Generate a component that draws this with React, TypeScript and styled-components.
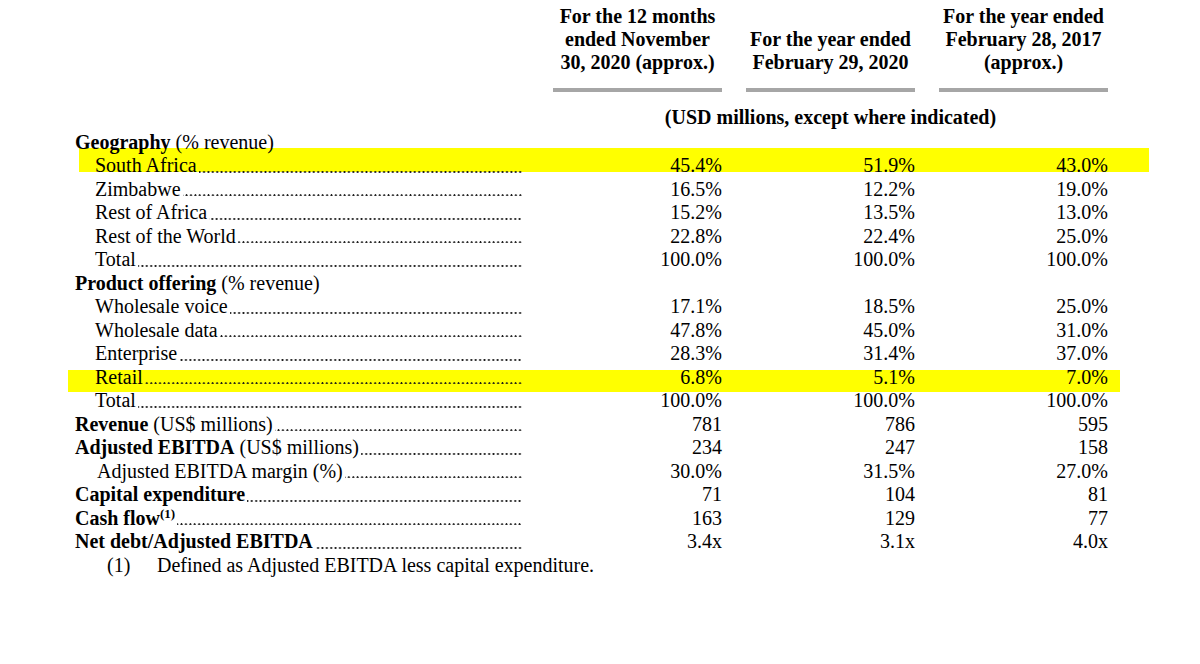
import React from "react";
import styled, { createGlobalStyle } from "styled-components";

const Global = createGlobalStyle`
  html { margin: 0; padding: 0; background: #ffffff; }
  body {
    margin: 0;
    padding: 0;
    font-family: "Liberation Serif", "Times New Roman", serif;
    color: #000000;
  }
`;

const Page = styled.div`
  position: relative;
  z-index: 0;
  width: 1200px;
  height: 664px;
  overflow: hidden;
  box-sizing: border-box;
  padding: 5px 0 0 75px;
`;

const Grid = styled.div`
  display: grid;
  grid-template-columns: 454px repeat(3, 169px);
  column-gap: 24px;
  width: 1033px;
`;

const HeadRow = styled(Grid)`
  align-items: end;
`;

const HeadCell = styled.div`
  font-weight: 700;
  font-size: 20px;
  line-height: 23px;
  text-align: center;
  padding-bottom: 14px;
  border-bottom: 4px solid #a6a6a6;
`;

const UnitsRow = styled(Grid)`
  margin-top: 14px;
  margin-bottom: 1px;
`;

const Units = styled.div`
  grid-column: 2 / 5;
  text-align: center;
  font-weight: 700;
  font-size: 20px;
  line-height: 23.5px;
`;

type Hl = { l: number; r: number; t: number; b: number };

const Row = styled(Grid)<{ $hl?: Hl }>`
  position: relative;
  font-size: 20px;
  line-height: 23.5px;
  white-space: nowrap;
  &::before {
    content: "";
    display: ${(p) => (p.$hl ? "block" : "none")};
    position: absolute;
    z-index: -1;
    background: #ffff00;
    left: ${(p) => p.$hl?.l ?? 0}px;
    right: ${(p) => p.$hl?.r ?? 0}px;
    top: ${(p) => p.$hl?.t ?? 0}px;
    bottom: ${(p) => p.$hl?.b ?? 0}px;
  }
`;

const Label = styled.div<{ $indent: number }>`
  display: flex;
  min-width: 0;
  padding-left: ${(p) => p.$indent}px;
  padding-right: 7px;
`;

const Bold = styled.b`
  font-weight: 700;
`;

const Sup = styled.sup`
  font-size: 13px;
  font-weight: 700;
  line-height: 0;
  vertical-align: 7px;
`;

const Leader = styled.span`
  flex: 1;
  min-width: 0;
  margin-left: 2px;
  background-image: radial-gradient(circle at 2.2px 17.6px, #1a1a1a 0, #1a1a1a 0.75px, rgba(0, 0, 0, 0) 1.25px);
  background-size: 4.4px 23.5px;
  background-repeat: repeat-x;
  background-position: right top;
`;

const Value = styled.div`
  text-align: right;
`;

const Foot = styled.div`
  font-size: 20px;
  line-height: 23.5px;
  padding-left: 32px;
  white-space: nowrap;
`;

const FootNum = styled.span`
  display: inline-block;
  width: 50px;
`;

type RowData = {
  label: React.ReactNode;
  indent: number;
  values?: [string, string, string];
  hl?: Hl;
};

const rows: RowData[] = [
  { label: <><Bold>Geography</Bold> (% revenue)</>, indent: 0 },
  { label: "South Africa", indent: 20, values: ["45.4%", "51.9%", "43.0%"], hl: { l: 4, r: -41, t: -6, b: 6 } },
  { label: "Zimbabwe ", indent: 20, values: ["16.5%", "12.2%", "19.0%"] },
  { label: "Rest of Africa", indent: 20, values: ["15.2%", "13.5%", "13.0%"] },
  { label: "Rest of the World ", indent: 20, values: ["22.8%", "22.4%", "25.0%"] },
  { label: "Total", indent: 20, values: ["100.0%", "100.0%", "100.0%"] },
  { label: <><Bold>Product offering</Bold> (% revenue)</>, indent: 0 },
  { label: "Wholesale voice ", indent: 20, values: ["17.1%", "18.5%", "25.0%"] },
  { label: "Wholesale data", indent: 20, values: ["47.8%", "45.0%", "31.0%"] },
  { label: "Enterprise ", indent: 20, values: ["28.3%", "31.4%", "37.0%"] },
  { label: "Retail", indent: 20, values: ["6.8%", "5.1%", "7.0%"], hl: { l: -7, r: -12, t: 4, b: -3 } },
  { label: "Total", indent: 20, values: ["100.0%", "100.0%", "100.0%"] },
  { label: <><Bold>Revenue</Bold> (US$ millions) </>, indent: 0, values: ["781", "786", "595"] },
  { label: <><Bold>Adjusted EBITDA</Bold> (US$ millions)</>, indent: 0, values: ["234", "247", "158"] },
  { label: "Adjusted EBITDA margin (%) ", indent: 22, values: ["30.0%", "31.5%", "27.0%"] },
  { label: <Bold>Capital expenditure</Bold>, indent: 0, values: ["71", "104", "81"] },
  { label: <><Bold>Cash flow</Bold><Sup>(1)</Sup> </>, indent: 0, values: ["163", "129", "77"] },
  { label: <Bold>Net debt/Adjusted EBITDA</Bold>, indent: 0, values: ["3.4x", "3.1x", "4.0x"] },
];

export default function App() {
  return (
    <>
      <Global />
      <Page>
        <HeadRow>
          <div />
          <HeadCell>For the 12 months<br />ended November<br />30, 2020 (approx.)</HeadCell>
          <HeadCell>For the year ended<br />February 29, 2020</HeadCell>
          <HeadCell>For the year ended<br />February 28, 2017<br />(approx.)</HeadCell>
        </HeadRow>
        <UnitsRow>
          <Units>(USD millions, except where indicated)</Units>
        </UnitsRow>
        {rows.map((r, i) => (
          <Row key={i} $hl={r.hl}>
            <Label $indent={r.indent}>
              <span>{r.label}</span>
              {r.values && <Leader />}
            </Label>
            {r.values ? r.values.map((v, j) => <Value key={j}>{v}</Value>) : null}
          </Row>
        ))}
        <Foot>
          <FootNum>(1)</FootNum>Defined as Adjusted EBITDA less capital expenditure.
        </Foot>
      </Page>
    </>
  );
}
